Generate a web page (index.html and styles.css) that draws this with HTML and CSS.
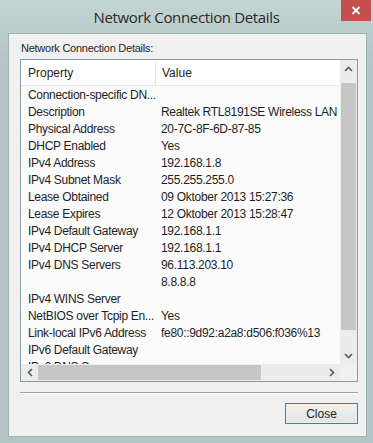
FILE: index.html
```html
<!DOCTYPE html>
<html lang="en">
<head>
    <meta charset="UTF-8">
    <title>Network Connection Details</title>
    <link rel="stylesheet" href="styles.css">
</head>
<body>

    <div class="window">
        <div class="titlebar">
            <span></span>
            <h1 class="title">Network Connection Details</h1>
            <button class="close-x" aria-label="Close">
                <svg width="10" height="9" viewBox="0 0 10 9"><path d="M1.5 1 L8.5 8 M8.5 1 L1.5 8" stroke="#fff" stroke-width="1.8"/></svg>
            </button>
        </div>

        <div class="client">
            <p class="caption">Network Connection Details:</p>

            <div class="listbox">
                <div class="list-view">
                    <div class="row head">
                        <span class="cell">Property</span>
                        <span class="cell value">Value</span>
                    </div>
                    <div class="rows">
                        <div class="row"><span class="cell">Connection-specific DN...</span><span class="cell value"></span></div>
                        <div class="row"><span class="cell">Description</span><span class="cell value">Realtek RTL8191SE Wireless LAN 802.11n PCIe Wi-Fi Adapter</span></div>
                        <div class="row"><span class="cell">Physical Address</span><span class="cell value">20-7C-8F-6D-87-85</span></div>
                        <div class="row"><span class="cell">DHCP Enabled</span><span class="cell value">Yes</span></div>
                        <div class="row"><span class="cell">IPv4 Address</span><span class="cell value">192.168.1.8</span></div>
                        <div class="row"><span class="cell">IPv4 Subnet Mask</span><span class="cell value">255.255.255.0</span></div>
                        <div class="row"><span class="cell">Lease Obtained</span><span class="cell value">09 Oktober 2013 15:27:36</span></div>
                        <div class="row"><span class="cell">Lease Expires</span><span class="cell value">12 Oktober 2013 15:28:47</span></div>
                        <div class="row"><span class="cell">IPv4 Default Gateway</span><span class="cell value">192.168.1.1</span></div>
                        <div class="row"><span class="cell">IPv4 DHCP Server</span><span class="cell value">192.168.1.1</span></div>
                        <div class="row"><span class="cell">IPv4 DNS Servers</span><span class="cell value">96.113.203.10</span></div>
                        <div class="row"><span class="cell"></span><span class="cell value">8.8.8.8</span></div>
                        <div class="row"><span class="cell">IPv4 WINS Server</span><span class="cell value"></span></div>
                        <div class="row"><span class="cell">NetBIOS over Tcpip En...</span><span class="cell value">Yes</span></div>
                        <div class="row"><span class="cell">Link-local IPv6 Address</span><span class="cell value">fe80::9d92:a2a8:d506:f036%13</span></div>
                        <div class="row"><span class="cell">IPv6 Default Gateway</span><span class="cell value"></span></div>
                        <div class="row"><span class="cell">IPv6 DNS Server</span><span class="cell value"></span></div>
                    </div>
                </div>

                <div class="vscroll">
                    <span class="arrow">
                        <svg width="9" height="6" viewBox="0 0 9 6"><path d="M1 5 L4.5 1.5 L8 5" fill="none" stroke="#5a5a5a" stroke-width="1.6"/></svg>
                    </span>
                    <span class="gap-top"></span>
                    <span class="thumb"></span>
                    <span class="gap-bottom"></span>
                    <span class="arrow">
                        <svg width="9" height="6" viewBox="0 0 9 6"><path d="M1 1 L4.5 4.5 L8 1" fill="none" stroke="#5a5a5a" stroke-width="1.6"/></svg>
                    </span>
                </div>

                <div class="hscroll">
                    <span class="arrow">
                        <svg width="6" height="9" viewBox="0 0 6 9"><path d="M5 1 L1.5 4.5 L5 8" fill="none" stroke="#5a5a5a" stroke-width="1.6"/></svg>
                    </span>
                    <span class="thumb"></span>
                    <span class="track"></span>
                    <span class="arrow">
                        <svg width="6" height="9" viewBox="0 0 6 9"><path d="M1 1 L4.5 4.5 L1 8" fill="none" stroke="#5a5a5a" stroke-width="1.6"/></svg>
                    </span>
                </div>

                <div class="corner"></div>
            </div>

            <div class="separator"></div>

            <div class="buttons">
                <button class="btn">Close</button>
            </div>
        </div>
    </div>

</body>
</html>
```

FILE: styles.css
```css
/* Window frame */
body {
    margin: 0;
    font-family: "Liberation Sans", Arial, sans-serif;
    font-size: 12px;
    color: #1e1e1e;
}

.window {
    width: 373px;
    height: 443px;
    background: linear-gradient(#c4d4d3, #b3c6c5 60px, #b3c6c5);
    display: flex;
    flex-direction: column;
    box-sizing: border-box;
}

.titlebar {
    height: 33px;
    display: grid;
    grid-template-columns: 1fr auto 1fr;
}

.title {
    margin: 0;
    font-family: "Open Sans", sans-serif;
    font-weight: normal;
    font-size: 15px;
    letter-spacing: -0.35px;
    line-height: 34px;
    color: #2a2a2a;
}

.close-x {
    justify-self: end;
    align-self: start;
    width: 30px;
    height: 21px;
    margin-right: 2px;
    border: none;
    padding: 0;
    background-color: #c5504b;
    display: flex;
    align-items: center;
    justify-content: center;
}

/* Client area */
.client {
    flex: 1;
    margin: 0 6px 6px 8px;
    background-color: #f0f0f0;
    border: 1px solid #9fb1b0;
    padding: 7px 8px 0 11px;
    display: flex;
    flex-direction: column;
}

.caption {
    margin: 0 0 3px 1px;
    line-height: 15px;
    font-size: 11px;
    letter-spacing: -0.25px;
}

/* List view with scrollbars */
.listbox {
    height: 321px;
    border: 1px solid #8e9aa2;
    background-color: #fbfbfb;
    display: grid;
    grid-template-columns: 1fr 17px;
    grid-template-rows: 1fr 17px;
}

.list-view {
    overflow: hidden;
    display: flex;
    flex-direction: column;
    letter-spacing: -0.3px;
}

.row {
    display: grid;
    grid-template-columns: 134px 1fr;
    height: 17px;
    line-height: 17px;
}

.cell {
    padding-left: 7px;
    white-space: nowrap;
}

.cell.value {
    padding-left: 6px;
}

.row.head {
    flex: none;
    height: 25px;
    line-height: 26px;
    background-color: #ffffff;
    border-bottom: 1px solid #e6e9ec;
    letter-spacing: 0;
}

.row.head .cell.value {
    border-left: 1px solid #e3e6e8;
    padding-left: 6px;
}

.rows {
    padding-top: 1px;
    overflow: hidden;
}

.vscroll {
    display: flex;
    flex-direction: column;
    background-color: #ececec;
}

.vscroll .arrow,
.hscroll .arrow {
    flex: none;
    width: 17px;
    height: 17px;
    display: flex;
    align-items: center;
    justify-content: center;
}

.vscroll .gap-top {
    height: 6px;
}

.vscroll .thumb {
    height: 247px;
    margin: 0 1px;
    background-color: #c6c6c6;
}

.vscroll .gap-bottom {
    flex: 1;
}

.hscroll {
    display: flex;
    background-color: #ececec;
}

.hscroll .thumb {
    width: 223px;
    margin: 1px 0;
    background-color: #c6c6c6;
}

.hscroll .track {
    flex: 1;
}

.corner {
    background-color: #f0f0f0;
}

.separator {
    margin-top: 10px;
    border-top: 1px solid #a0a0a0;
    border-bottom: 1px solid #ffffff;
}

/* Buttons */
.buttons {
    display: flex;
    justify-content: flex-end;
    margin-top: 9px;
}

.btn {
    width: 73px;
    height: 21px;
    font-family: "Liberation Sans", Arial, sans-serif;
    font-size: 12px;
    color: #1e1e1e;
    background: linear-gradient(#f2f2f2, #e3e3e3);
    border: 1px solid #3c7fb1;
    box-shadow: inset 0 0 0 1px #e8f2fa;
    padding: 0;
}
```
